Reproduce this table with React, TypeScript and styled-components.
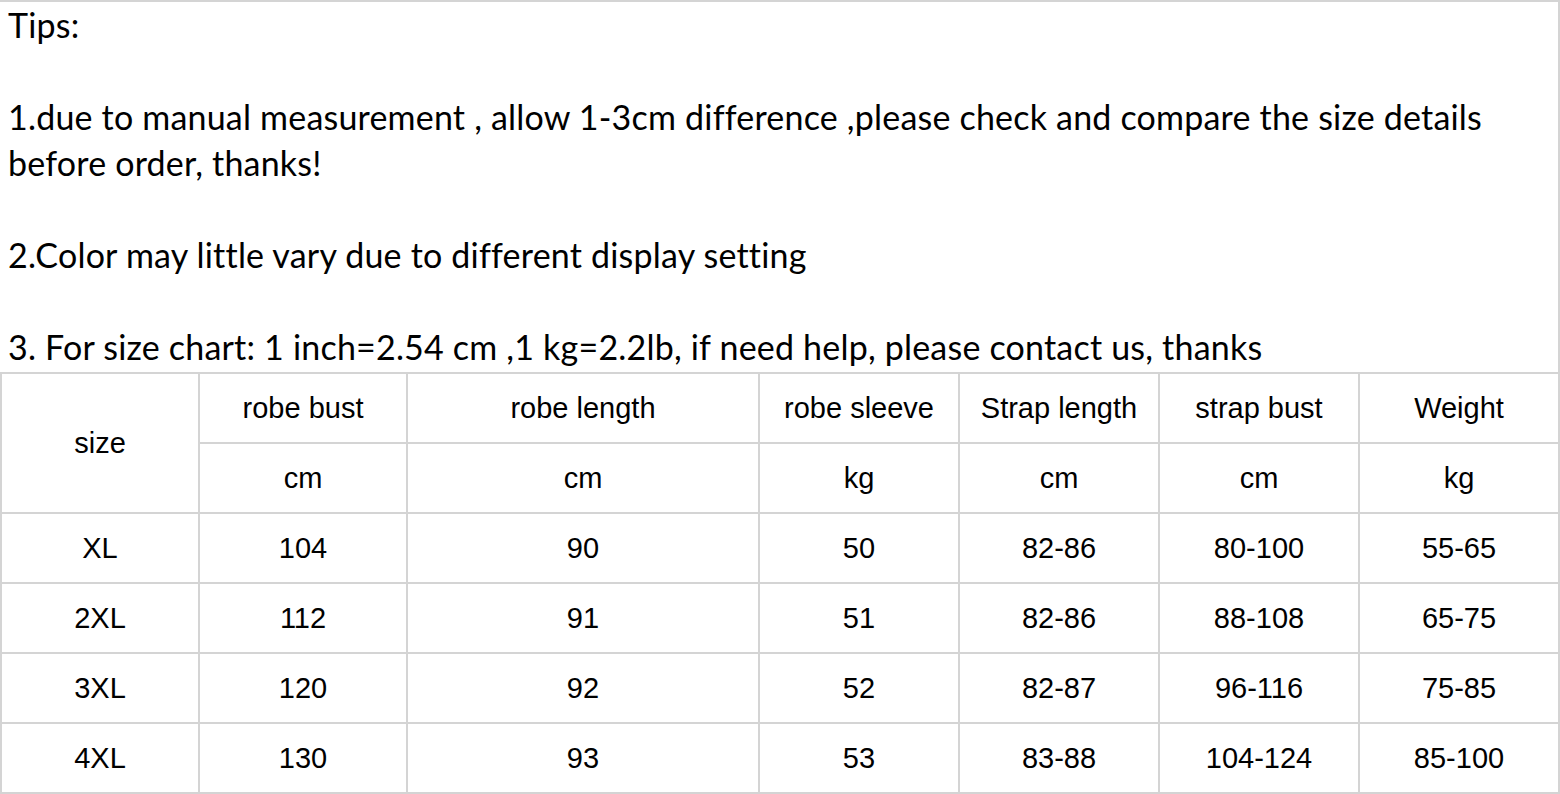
import React from 'react';
import styled, { createGlobalStyle } from 'styled-components';

const Global = createGlobalStyle`
  html, body { margin: 0; padding: 0; background: #fff; }
  body { width: 1560px; height: 794px; overflow: hidden; }
`;

const Sheet = styled.div`
  width: 1560px;
  height: 794px;
  display: flex;
  flex-direction: column;
  background: #fff;
`;

const Tips = styled.div`
  border-top: 2px solid #d4d4d4;
  border-right: 2px solid #d4d4d4;
  padding: 0 0 2px 8px;
  font-family: Lato, "Open Sans", sans-serif;
  font-size: 34px;
  letter-spacing: 0.2px;
  line-height: 46px;
  color: #000;
  white-space: nowrap;
`;

const Para = styled.p<{ $first?: boolean }>`
  margin: ${(p) => (p.$first ? '0' : '46px 0 0')};
`;

const Table = styled.div`
  display: grid;
  grid-template-columns: 196px 206px 350px repeat(4, 198px);
  grid-template-rows: repeat(6, 68px);
  gap: 2px;
  padding: 2px;
  background: #d4d4d4;
  font-family: "Liberation Sans", Arial, sans-serif;
  font-size: 29px;
  color: #000;
`;

const Cell = styled.div<{ $tall?: boolean }>`
  background: #fff;
  display: flex;
  align-items: center;
  justify-content: center;
  white-space: nowrap;
  ${(p) => (p.$tall ? 'grid-row: span 2;' : '')}
`;

const heads = ['robe bust', 'robe length', 'robe sleeve', 'Strap length', 'strap bust', 'Weight'];
const units = ['cm', 'cm', 'kg', 'cm', 'cm', 'kg'];
const rows = [
  ['XL', '104', '90', '50', '82-86', '80-100', '55-65'],
  ['2XL', '112', '91', '51', '82-86', '88-108', '65-75'],
  ['3XL', '120', '92', '52', '82-87', '96-116', '75-85'],
  ['4XL', '130', '93', '53', '83-88', '104-124', '85-100'],
];

export default function App() {
  return (
    <>
      <Global />
      <Sheet>
        <Tips>
          <Para $first>Tips:</Para>
          <Para>
            1.due to manual measurement , allow 1-3cm difference ,please check and compare the size details
            <br />
            before order, thanks!
          </Para>
          <Para>2.Color may little vary due to different display setting</Para>
          <Para>3. For size chart: 1 inch=2.54 cm ,1 kg=2.2lb, if need help, please contact us, thanks</Para>
        </Tips>
        <Table>
          <Cell $tall>size</Cell>
          {heads.map((h) => (
            <Cell key={h}>{h}</Cell>
          ))}
          {units.map((u, i) => (
            <Cell key={i}>{u}</Cell>
          ))}
          {rows.map((r) =>
            r.map((v, i) => <Cell key={r[0] + i}>{v}</Cell>)
          )}
        </Table>
      </Sheet>
    </>
  );
}
